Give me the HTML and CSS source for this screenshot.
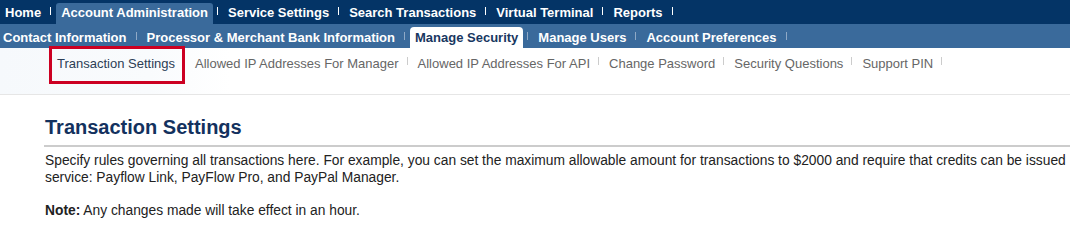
FILE: index.html
```html
<!DOCTYPE html>
<html lang="en">
<head>
<meta charset="utf-8">
<title>Transaction Settings</title>
<link rel="stylesheet" href="styles.css">
</head>
<body>
<div class="page">
  <nav class="nav nav-main">
    <a class="item" href="#">Home</a><span class="sep"></span>
    <a class="item active" href="#">Account Administration</a><span class="sep"></span>
    <a class="item" href="#">Service Settings</a><span class="sep"></span>
    <a class="item" href="#">Search Transactions</a><span class="sep"></span>
    <a class="item" href="#">Virtual Terminal</a><span class="sep"></span>
    <a class="item" href="#">Reports</a><span class="sep"></span>
  </nav>
  <nav class="nav nav-sub">
    <a class="item first" href="#">Contact Information</a><span class="sep"></span>
    <a class="item" href="#">Processor &amp; Merchant Bank Information</a><span class="sep"></span>
    <a class="item active" href="#">Manage Security</a><span class="sep"></span>
    <a class="item" href="#">Manage Users</a><span class="sep"></span>
    <a class="item" href="#">Account Preferences</a><span class="sep"></span>
  </nav>
  <nav class="nav nav-third">
    <a class="item current" href="#">Transaction Settings</a><span class="sep"></span>
    <a class="item" href="#">Allowed IP Addresses For Manager</a><span class="sep"></span>
    <a class="item" href="#">Allowed IP Addresses For API</a><span class="sep"></span>
    <a class="item" href="#">Change Password</a><span class="sep"></span>
    <a class="item" href="#">Security Questions</a><span class="sep"></span>
    <a class="item" href="#">Support PIN</a><span class="sep"></span>
  </nav>
  <main class="content">
    <h1 class="title">Transaction Settings</h1>
    <p class="text intro">Specify rules governing all transactions here. For example, you can set the maximum allowable amount for transactions to $2000 and require that credits can be issued<br>service: Payflow Link, PayFlow Pro, and PayPal Manager.</p>
    <p class="text"><strong>Note:</strong> Any changes made will take effect in an hour.</p>
  </main>
  <div class="highlight"></div>
</div>
</body>
</html>
```

FILE: styles.css
```css
html, body {
  margin: 0;
  padding: 0;
  background: #ffffff;
  overflow: hidden;
}

.page {
  position: relative;
  width: 1070px;
  font-family: "Liberation Sans", Arial, sans-serif;
  font-size: 13px;
}

.nav {
  display: flex;
  align-items: flex-start;
  white-space: nowrap;
}

.nav .item {
  display: block;
  padding: 0 5px;
  text-decoration: none;
}

.nav .sep {
  display: block;
  width: 1px;
  height: 8px;
  margin: 0 5px 0 4px;
  flex: none;
}

/* top bar */
.nav-main {
  height: 24px;
  padding-top: 3px;
  box-sizing: border-box;
  background: #043466;
}

.nav-main .item {
  height: 21px;
  line-height: 20px;
  color: #ffffff;
  font-weight: bold;
  border-radius: 3px 3px 0 0;
}

.nav-main .item.active {
  background: #3a6a9b;
}

.nav-main .sep {
  margin-top: 4px;
  background: #ffffff;
}

/* second bar */
.nav-sub {
  height: 24px;
  padding-top: 3px;
  box-sizing: border-box;
  background: #3a6a9b;
}

.nav-sub .item {
  height: 21px;
  line-height: 22px;
  color: #ffffff;
  font-weight: bold;
}

.nav-sub .item.first {
  padding-left: 3px;
}

.nav-sub .item.active {
  background: #ffffff;
  color: #183761;
  border-radius: 4px 4px 0 0;
}

.nav-sub .sep {
  margin-top: 5px;
  background: #8fa9c6;
}

/* third row */
.nav-third {
  height: 47px;
  box-sizing: border-box;
  padding: 8px 0 0 52px;
  border-bottom: 1px solid #e6e6e6;
  background: linear-gradient(to right, #f6f9fc 0, #f9fbfd 150px, #ffffff 230px);
}

.nav-third .item {
  line-height: 16px;
  color: #666666;
  padding: 0 4px 0 5px;
}

.nav-third .item.current {
  color: #2c3e55;
  padding-right: 5px;
}

.nav-third .sep {
  margin-top: 1px;
  background: #cccccc;
}

/* content */
.content {
  padding: 0 0 0 44px;
}

.title {
  margin: 20px 0 0;
  padding: 0 0 6px 1px;
  font-size: 20px;
  line-height: 24px;
  font-weight: bold;
  color: #13315e;
  border-bottom: 2px solid #cccccc;
}

.text {
  margin: 5px 0 16px 1px;
  font-size: 13.8px;
  line-height: 17px;
  color: #222222;
  white-space: nowrap;
}

.text strong {
  font-weight: bold;
}

/* annotation overlay */
.highlight {
  position: absolute;
  left: 49px;
  top: 46px;
  width: 136px;
  height: 38px;
  box-sizing: border-box;
  border: 3px solid #cc0022;
}
```
